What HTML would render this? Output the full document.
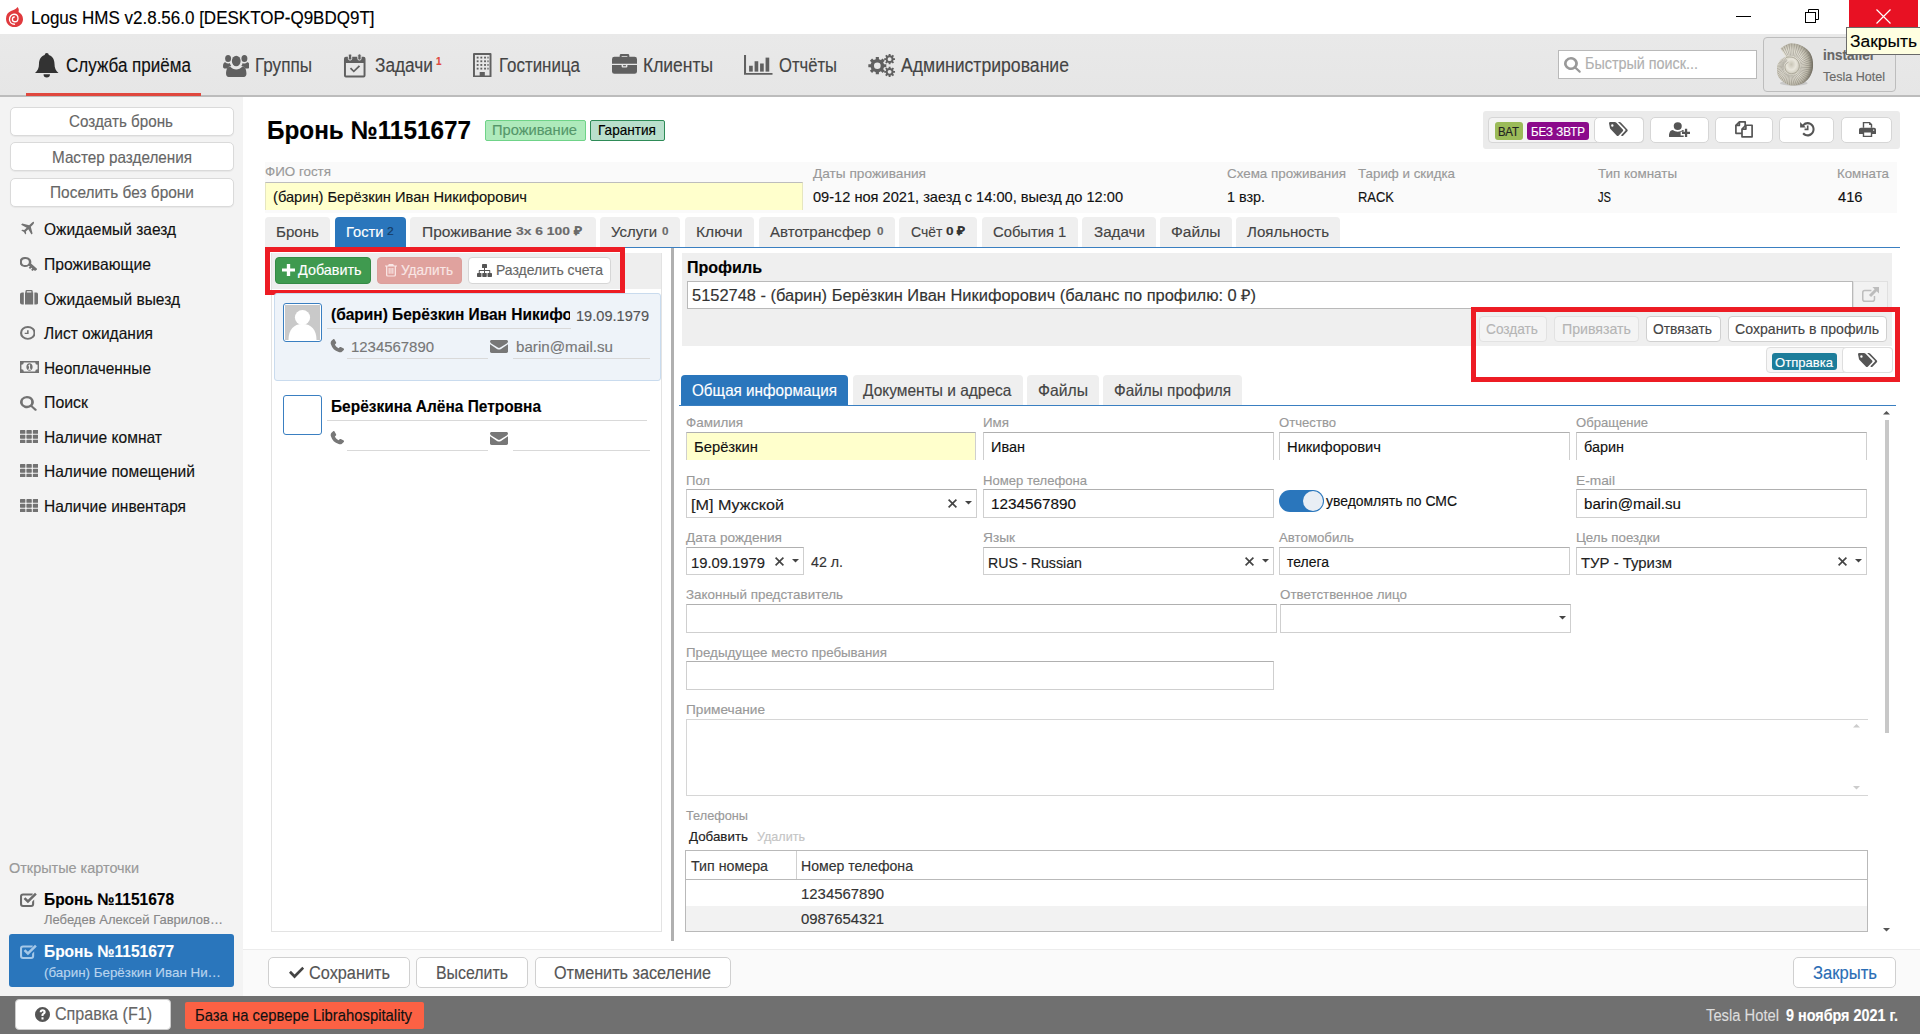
<!DOCTYPE html>
<html lang="ru"><head><meta charset="utf-8"><title>Logus HMS</title><style>
html,body{margin:0;padding:0;}
body{width:1920px;height:1034px;position:relative;overflow:hidden;background:#fff;font-family:"Liberation Sans",sans-serif;}
.b{position:absolute;box-sizing:border-box;}
.t{position:absolute;white-space:nowrap;transform-origin:0 0;display:block;-webkit-text-stroke:0.15px currentColor;}
svg{display:block;}
</style></head><body>
<div class="b" style="left:0px;top:0px;width:1920px;height:34px;background:#fff;"></div>
<svg style="position:absolute;left:5.500px;top:7px" width="17" height="20" viewBox="0 0 17 18" preserveAspectRatio="none"><path d="M11.500 0c1.500 1.500 1.500 3 1 4.500C15 5.500 17 8 17 11c0 4-3.500 7-8.500 7S0 15 0 10.500C0 7 2 4.500 5 3.500 7.500 2.700 10 2 11.500 0z" fill="#e03a3e"/><path d="M8.500 15.500c-3 0-5-2-5-4.500s2-4.500 4.500-4.500 4 1.700 4 3.600-1.400 3.200-3 3.200-2.600-1-2.600-2.300 1-2 1.900-2" fill="none" stroke="#fff" stroke-width="1.300" stroke-linecap="round"/></svg>
<span class="t" style="left:31px;top:9.79px;font-size:17.5px;line-height:17.5px;color:#000;transform:scaleX(0.9711);">Logus HMS v2.8.56.0 [DESKTOP-Q9BDQ9T]</span>
<div class="b" style="left:1736px;top:16px;width:15px;height:1px;background:#000;"></div>
<svg style="position:absolute;left:1805px;top:9px" width="15" height="15" viewBox="0 0 15 15" fill="none" stroke="#000" stroke-width="1"><rect x="0.500" y="3.500" width="10" height="10"/><path d="M3.500 3.500v-3h10v10h-3"/></svg>
<div class="b" style="left:1849px;top:0px;width:69px;height:34px;background:#e81123;"></div>
<svg style="position:absolute;left:1876px;top:9px" width="15" height="15" viewBox="0 0 15 15" fill="none" stroke="#fff" stroke-width="1.200"><path d="M0.500 0.500l14 14M14.500 0.500l-14 14"/></svg>
<div class="b" style="left:0px;top:34px;width:1920px;height:63px;background:linear-gradient(#e9e9e9,#e6e6e6);border-bottom:2px solid #bcbcbc;"></div>
<svg style="position:absolute;left:35px;top:53px" width="23.5" height="24.5" viewBox="1.2 1.2 17.6 17.7" fill="#333" color="#333" preserveAspectRatio="none" ><path d="M10 1.2c-.9 0-1.5.6-1.5 1.4C5.6 3.4 4.2 6 4.2 9c0 3.2-1 5-3 6.600h17.600c-2-1.600-3-3.400-3-6.600 0-3-1.400-5.600-4.300-6.400 0-.8-.6-1.400-1.500-1.400z"/><path d="M7.600 16.500a2.400 2.400 0 0 0 4.800 0z"/></svg>
<span class="t" style="left:66px;top:55.99px;font-size:19.5px;line-height:19.5px;color:#111;transform:scaleX(0.8736);">Служба приёма</span>
<div class="b" style="left:26px;top:93px;width:175px;height:3px;background:#e0483e;"></div>
<svg style="position:absolute;left:222.5px;top:53px" width="26.5" height="24.5" viewBox="0 0 26 20" fill="#606060" color="#606060" preserveAspectRatio="none" ><circle cx="13" cy="6.500" r="4.300"/><path d="M5.500 19.500c-1.500 0-2.500-.8-2.500-2.500 0-3 1-6 4-6 1.500 1.500 4 2.500 6 2.500s4.500-1 6-2.500c3 0 4 3 4 6 0 1.700-1 2.500-2.500 2.500z"/><circle cx="5" cy="4.500" r="2.900"/><circle cx="21" cy="4.500" r="2.900"/><path d="M0 11c0-2 .7-3.500 2.300-3.500 .9.700 1.800 1 2.700 1 .6 0 1.200-.1 1.700-.4.300 1 .8 1.900 1.400 2.500-1.800 0-3 .9-3.700 2.100H2.200C.8 12.700 0 12.100 0 11z"/><path d="M26 11c0-2-.7-3.500-2.300-3.500-.9.700-1.800 1-2.700 1-.6 0-1.200-.1-1.700-.4-.3 1-.8 1.900-1.400 2.500 1.800 0 3 .9 3.700 2.100h2.200c1.400 0 2.200-.6 2.200-1.700z"/></svg>
<span class="t" style="left:255px;top:55.99px;font-size:19.5px;line-height:19.5px;color:#444;transform:scaleX(0.8771);">Группы</span>
<svg style="position:absolute;left:343px;top:53px" width="23.5" height="24.5" viewBox="0 0 24 26" fill="#606060" color="#606060" preserveAspectRatio="none" ><path fill-rule="evenodd" d="M3 4h18a2 2 0 0 1 2 2v18a2 2 0 0 1-2 2H3a2 2 0 0 1-2-2V6a2 2 0 0 1 2-2zm0 6.500v13.500h18V10.500z"/><rect x="5.500" y="1" width="3.400" height="6.500" rx="1.500" stroke="#e8e8e8" stroke-width="1"/><rect x="15.100" y="1" width="3.400" height="6.500" rx="1.500" stroke="#e8e8e8" stroke-width="1"/><path d="M7 16.800l1.300-1.300 2.700 2.700 5.200-5.200 1.300 1.300-6.500 6.500z"/></svg>
<span class="t" style="left:375px;top:55.99px;font-size:19.5px;line-height:19.5px;color:#444;transform:scaleX(0.8857);">Задачи</span>
<span class="t" style="left:436px;top:55.77px;font-size:11.5px;line-height:11.5px;color:#e0483e;font-weight:bold;transform:scaleX(0.8585);">1</span>
<svg style="position:absolute;left:473px;top:52.7px" width="18.5" height="24.5" viewBox="0 0 18 24" fill="#606060" color="#606060" preserveAspectRatio="none" ><path fill-rule="evenodd" d="M1 0h16a1 1 0 0 1 1 1v22a1 1 0 0 1-1 1H1a1 1 0 0 1-1-1V1a1 1 0 0 1 1-1zm.9 1.900v20.200h4.600v-3.600h5v3.600h4.600V1.900z"/><g><rect x="3.600" y="3.600" width="1.800" height="1.800"/><rect x="7.200" y="3.600" width="1.800" height="1.800"/><rect x="10.800" y="3.600" width="1.800" height="1.800"/><rect x="3.600" y="7.200" width="1.800" height="1.800"/><rect x="7.200" y="7.200" width="1.800" height="1.800"/><rect x="10.800" y="7.200" width="1.800" height="1.800"/><rect x="3.600" y="10.800" width="1.800" height="1.800"/><rect x="7.200" y="10.800" width="1.800" height="1.800"/><rect x="10.800" y="10.800" width="1.800" height="1.800"/><rect x="3.600" y="14.400" width="1.800" height="1.800"/><rect x="7.200" y="14.400" width="1.800" height="1.800"/><rect x="10.800" y="14.400" width="1.800" height="1.800"/><rect x="14.000" y="3.600" width="1.200" height="1.800"/><rect x="14.000" y="7.200" width="1.200" height="1.800"/><rect x="14.000" y="10.800" width="1.200" height="1.800"/><rect x="14.000" y="14.400" width="1.200" height="1.800"/></g></svg>
<span class="t" style="left:499px;top:55.99px;font-size:19.5px;line-height:19.5px;color:#444;transform:scaleX(0.8676);">Гостиница</span>
<svg style="position:absolute;left:611.5px;top:53.4px" width="25" height="21.3" viewBox="0 0 26 22" fill="#606060" color="#606060" preserveAspectRatio="none" ><path fill-rule="evenodd" d="M8 4V2.500A1.500 1.500 0 0 1 9.500 1h7A1.500 1.500 0 0 1 18 2.500V4h5.500A2.500 2.500 0 0 1 26 6.500V11H0V6.500A2.500 2.500 0 0 1 2.500 4zm2 0h6V3h-6z"/><path d="M0 12.500h10v1.500a1 1 0 0 0 1 1h4a1 1 0 0 0 1-1v-1.500h10v6.500a2.500 2.500 0 0 1-2.500 2.500h-21A2.500 2.500 0 0 1 0 19z"/><rect x="11.500" y="12.500" width="3" height="1.200"/></svg>
<span class="t" style="left:643px;top:55.99px;font-size:19.5px;line-height:19.5px;color:#444;transform:scaleX(0.8951);">Клиенты</span>
<svg style="position:absolute;left:744px;top:54px" width="28.5" height="21.7" viewBox="0 0 28 24" fill="#606060" color="#606060" preserveAspectRatio="none" ><path d="M0 1h2v20h26v2H0z"/><rect x="5" y="13" width="3.600" height="6.500"/><rect x="10.400" y="8" width="3.600" height="11.500"/><rect x="15.800" y="10.500" width="3.600" height="9"/><rect x="21.200" y="4" width="3.600" height="15.500"/></svg>
<span class="t" style="left:779px;top:55.99px;font-size:19.5px;line-height:19.5px;color:#444;transform:scaleX(0.8522);">Отчёты</span>
<svg style="position:absolute;left:868px;top:53.2px" width="27.5" height="24.5" viewBox="0 0 28 26" fill="#606060" color="#606060" preserveAspectRatio="none" ><path fill-rule="evenodd" d="M18.66 11.90 L18.66 15.10 L16.31 15.13 L15.47 17.16 L17.11 18.85 L14.85 21.11 L13.16 19.47 L11.13 20.31 L11.10 22.66 L7.90 22.66 L7.87 20.31 L5.84 19.47 L4.15 21.11 L1.89 18.85 L3.53 17.16 L2.69 15.13 L0.34 15.10 L0.34 11.90 L2.69 11.87 L3.53 9.84 L1.89 8.15 L4.15 5.89 L5.84 7.53 L7.87 6.69 L7.90 4.34 L11.10 4.34 L11.13 6.69 L13.16 7.53 L14.85 5.89 L17.11 8.15 L15.47 9.84 L16.31 11.87z M6.10 13.50 a3.40 3.40 0 1 0 6.80 0 a3.40 3.40 0 1 0 -6.80 0z"/><path fill-rule="evenodd" d="M27.52 5.54 L27.52 7.46 L25.99 7.46 L25.50 8.64 L26.58 9.72 L25.22 11.08 L24.14 10.00 L22.96 10.49 L22.96 12.02 L21.04 12.02 L21.04 10.49 L19.86 10.00 L18.78 11.08 L17.42 9.72 L18.50 8.64 L18.01 7.46 L16.48 7.46 L16.48 5.54 L18.01 5.54 L18.50 4.36 L17.42 3.28 L18.78 1.92 L19.86 3.00 L21.04 2.51 L21.04 0.98 L22.96 0.98 L22.96 2.51 L24.14 3.00 L25.22 1.92 L26.58 3.28 L25.50 4.36 L25.99 5.54z M20.00 6.50 a2.00 2.00 0 1 0 4.00 0 a2.00 2.00 0 1 0 -4.00 0z"/><path fill-rule="evenodd" d="M27.52 19.04 L27.52 20.96 L25.99 20.96 L25.50 22.14 L26.58 23.22 L25.22 24.58 L24.14 23.50 L22.96 23.99 L22.96 25.52 L21.04 25.52 L21.04 23.99 L19.86 23.50 L18.78 24.58 L17.42 23.22 L18.50 22.14 L18.01 20.96 L16.48 20.96 L16.48 19.04 L18.01 19.04 L18.50 17.86 L17.42 16.78 L18.78 15.42 L19.86 16.50 L21.04 16.01 L21.04 14.48 L22.96 14.48 L22.96 16.01 L24.14 16.50 L25.22 15.42 L26.58 16.78 L25.50 17.86 L25.99 19.04z M20.00 20.00 a2.00 2.00 0 1 0 4.00 0 a2.00 2.00 0 1 0 -4.00 0z"/></svg>
<span class="t" style="left:901px;top:55.99px;font-size:19.5px;line-height:19.5px;color:#444;transform:scaleX(0.9035);">Администрирование</span>
<div class="b" style="left:1558px;top:50px;width:199px;height:29px;background:#fff;border:1px solid #b9b9b9;"></div>
<svg style="position:absolute;left:1563.8px;top:57.2px" width="17" height="16" viewBox="0 0 16 16" fill="#999" color="#999" preserveAspectRatio="none" ><path fill-rule="evenodd" d="M6.500 0a6.500 6.500 0 0 1 5.300 10.300l3.800 3.800a1.100 1.100 0 0 1-1.500 1.500l-3.800-3.800A6.500 6.500 0 1 1 6.500 0zm0 2.500a4 4 0 1 0 0 8 4 4 0 0 0 0-8z"/></svg>
<span class="t" style="left:1585px;top:56.46px;font-size:16px;line-height:16px;color:#b0b0b0;transform:scaleX(0.8972);">Быстрый поиск...</span>
<div class="b" style="left:1763px;top:37px;width:133px;height:55px;background:#e6e6e6;border:1px solid #bdbdbd;border-radius:4px;"></div>
<svg style="position:absolute;left:1777.3px;top:43.2px" width="37.5" height="43" viewBox="0 0 38 43"><defs><radialGradient id="sg" cx="38%" cy="50%" r="62%"><stop offset="0" stop-color="#efede4"/><stop offset=".55" stop-color="#e4e1d5"/><stop offset=".8" stop-color="#b9b5a6"/><stop offset="1" stop-color="#6e6a5e"/></radialGradient><radialGradient id="sg2" cx="45%" cy="45%" r="60%"><stop offset="0" stop-color="#c9c5b6"/><stop offset=".5" stop-color="#e9e6dc"/><stop offset="1" stop-color="#c4c0b1"/></radialGradient></defs><ellipse cx="17" cy="40.500" rx="14" ry="2.500" fill="#000" opacity=".13"/><path d="M3.6 5.2 L5.4 3.9 L7.3 2.6 L9.4 1.4 L11.7 0.5 L14.1 0.0 L16.5 0.1 L19.0 0.4 L21.4 1.0 L23.7 1.9 L25.9 2.9 L28.0 4.2 L30.0 5.8 L31.8 7.5 L33.3 9.4 L34.5 11.6 L35.4 13.9 L36.0 16.3 L36.4 18.7 L36.5 21.0 L36.5 23.4 L36.3 25.7 L35.8 28.0 L35.1 30.2 L34.1 32.3 L33.0 34.3 L31.6 36.1 L30.1 37.8 L28.3 39.2 L26.4 40.4 L24.4 41.3 L22.4 42.0 L20.3 42.4 L18.2 42.7 L16.1 42.8 L14.1 42.7 L12.1 42.3 L10.2 41.6 L8.5 40.7 L6.9 39.6 L5.4 38.4 L4.1 37.2 L2.8 35.9 L1.8 34.5 L1.0 32.9 L0.4 31.3 L0.1 29.7 L-0.1 28.0 L-0.2 26.4 L-0.1 24.9 L0.0 23.4 L0.3 21.9 L0.9 20.6 L1.6 19.3 L2.4 18.2 L3.2 17.1 L4.1 16.1 L5.1 15.3 L6.3 14.7 L7.4 14.2 L8.5 13.7z" fill="url(#sg)"/><path d="M9.8 12.8 L4.9 4.6 M11.2 12.6 L7.1 3.1 M12.6 12.6 L9.5 1.7 M13.9 12.8 L12.1 0.7 M15.2 13.0 L14.9 0.3 M16.4 13.2 L17.7 0.5 M17.7 13.6 L20.5 1.1 M18.8 14.2 L23.2 2.0 M19.8 14.9 L25.8 3.2 M20.8 15.7 L28.2 4.7 M21.6 16.7 L30.4 6.5 M22.3 17.7 L32.4 8.6 M22.8 18.8 L33.9 11.0 M23.3 19.9 L35.0 13.6 M23.5 21.0 L35.7 16.4 M23.7 22.2 L36.1 19.1 M23.7 23.4 L36.2 21.9 M23.6 24.6 L36.1 24.6 M23.3 25.7 L35.7 27.2 M22.9 26.8 L34.9 29.8 M22.4 27.8 L33.8 32.2 M21.7 28.7 L32.5 34.4 M20.9 29.5 L30.9 36.5 M20.0 30.2 L29.0 38.3 M19.1 30.8 L26.9 39.8 M18.1 31.3 L24.6 40.9 M17.1 31.6 L22.2 41.7 M16.0 31.8 L19.8 42.2 M15.0 31.9 L17.5 42.4 M14.0 31.9 L15.1 42.4 M12.9 31.8 L12.8 42.2 M11.9 31.5 L10.6 41.5 M11.0 31.1 L8.6 40.4 M10.1 30.5 L6.8 39.1 M9.4 29.9 L5.1 37.7 M8.7 29.2 L3.6 36.3 M8.1 28.4 L2.3 34.8 M7.7 27.6 L1.4 33.0 M7.3 26.7 L0.7 31.1 M7.1 25.8 L0.3 29.3 M7.0 24.9 L0.1 27.4 M6.9 24.0 L0.1 25.6 M7.0 23.2 L0.2 23.9 M7.1 22.3 L0.5 22.2 M7.4 21.5 L1.2 20.6 M7.8 20.7 L2.0 19.2 M8.3 20.1 L2.9 17.9 M8.9 19.5 L3.9 16.7 M9.5 19.0 L5.0 15.8 M10.2 18.5 L6.3 15.0 M10.8 18.2 L7.6 14.4" stroke="#77736a" stroke-width=".55" fill="none" opacity=".8"/><path d="M8.5 13.7 L10.4 13.2 L12.3 13.1 L14.1 13.2 L15.9 13.4 L17.5 14.0 L19.1 14.8 L20.4 15.9 L21.5 17.2 L22.4 18.6 L23.0 20.2 L23.3 21.8 L23.4 23.4 L23.2 25.0 L22.7 26.5 L21.9 27.9 L20.9 29.1 L19.7 30.0 L18.4 30.8 L17.0 31.3 L15.5 31.6 L14.1 31.6 L12.7 31.4 L11.4 30.9 L10.2 30.1 L9.2 29.2 L8.4 28.2 L7.9 27.0 L7.5 25.8 L7.3 24.6 L7.3 23.4 L7.5 22.2 L8.0 21.2 L8.6 20.3 L9.4 19.5 L10.3 18.9 L11.2 18.4z" fill="url(#sg2)"/><path d="M8.9 14.4 L11.0 13.9 L13.1 13.9 L15.1 14.1 L17.0 14.6 L18.7 15.5 L20.1 16.7 L21.3 18.2 L22.0 19.9 L22.5 21.6 L22.6 23.4 L22.3 25.1 L21.6 26.8 L20.6 28.2 L19.4 29.3 L18.0 30.1 L16.4 30.6 L14.9 30.8 L13.3 30.7 L11.9 30.2 L10.6 29.4 L9.6 28.4 L8.8 27.2 L8.3 26.0 L8.1 24.7 L8.1 23.4 L8.4 22.2 L9.0 21.1 L9.8 20.2 L10.7 19.6 L11.6 19.1" stroke="#a39f91" stroke-width=".8" fill="none"/></svg>
<span class="t" style="left:1822.5px;top:46.88px;font-size:15.5px;line-height:15.5px;color:#666;font-weight:bold;transform:scaleX(0.8746);">installer</span>
<span class="t" style="left:1822.5px;top:71.02px;font-size:12.5px;line-height:12.5px;color:#6a6a6a;transform:scaleX(1.0025);">Tesla Hotel</span>
<div class="b" style="left:1846px;top:26.5px;width:75px;height:28px;background:#ffffe1;border:1px solid #6a6a6a;"></div>
<span class="t" style="left:1849.5px;top:33.44px;font-size:17.2px;line-height:17.2px;color:#000;transform:scaleX(1.0120);">Закрыть</span>
<div class="b" style="left:0px;top:97px;width:243px;height:899px;background:#f3f3f3;"></div>
<div class="b" style="left:9.5px;top:106.5px;width:224.5px;height:29px;background:#fff;border:1px solid #dadada;border-radius:5px;box-shadow:0 1px 1px rgba(0,0,0,.05);"></div>
<span class="t" style="left:69px;top:112.53px;font-size:16.5px;line-height:16.5px;color:#666;transform:scaleX(0.9219);">Создать бронь</span>
<div class="b" style="left:9.5px;top:142px;width:224.5px;height:29px;background:#fff;border:1px solid #dadada;border-radius:5px;box-shadow:0 1px 1px rgba(0,0,0,.05);"></div>
<span class="t" style="left:52px;top:148.53px;font-size:16.5px;line-height:16.5px;color:#666;transform:scaleX(0.9249);">Мастер разделения</span>
<div class="b" style="left:9.5px;top:177.5px;width:224.5px;height:29px;background:#fff;border:1px solid #dadada;border-radius:5px;box-shadow:0 1px 1px rgba(0,0,0,.05);"></div>
<span class="t" style="left:50px;top:183.53px;font-size:16.5px;line-height:16.5px;color:#666;transform:scaleX(0.9359);">Поселить без брони</span>
<svg style="position:absolute;left:19.7px;top:221.4px" width="14.5" height="14" viewBox="0 0 18 18" fill="#727272" color="#727272" preserveAspectRatio="none" ><path d="M17 1c.8.800.300 2.600-1 3.900l-2.600 2.600 2.200 8.600-1.400 1.400-3.900-6.900-3 3 .4 2.600-1.100 1.100-1.700-3.300-3.300-1.700 1.100-1.100 2.600.4 3-3L1.400 4.700 2.800 3.300l8.600 2.200L14 2.900C15.300 1.600 16.400.400 17 1z"/></svg>
<span class="t" style="left:44px;top:221.03px;font-size:16.5px;line-height:16.5px;color:#111;transform:scaleX(0.9397);">Ожидаемый заезд</span>
<svg style="position:absolute;left:19.7px;top:257px" width="17" height="15" viewBox="0 0 18 18" fill="#727272" color="#727272" preserveAspectRatio="none" ><path fill-rule="evenodd" d="M6 0a6 6 0 0 1 5.700 7.900l6 6c.4.400.4 1 0 1.400l-1 1a1 1 0 0 1-1.400 0l-.8-.8-1.300 1.300-1.500-1.500 1.300-1.300-1-1-1.300 1.300L9.200 12.800l1.300-1.300-1.100-1.100A6 6 0 1 1 6 0zm-.3 2.300a3.700 3.700 0 1 0 0 7.400 3.700 3.700 0 0 0 0-7.400z"/></svg>
<span class="t" style="left:44px;top:256.03px;font-size:16.5px;line-height:16.5px;color:#111;transform:scaleX(0.9520);">Проживающие</span>
<svg style="position:absolute;left:19.8px;top:290.4px" width="18.2" height="14.6" viewBox="0 0 20 17" fill="#727272" color="#727272" preserveAspectRatio="none" ><path fill-rule="evenodd" d="M6 3V1.500A1.500 1.500 0 0 1 7.500 0h5A1.500 1.500 0 0 1 14 1.500V3h.5v14h-9V3zm1.500 0h5V1.500h-5z"/><path d="M4.200 3v14H2.300A2.300 2.300 0 0 1 0 14.700V5.300A2.300 2.300 0 0 1 2.300 3z"/><path d="M15.800 3v14h1.900a2.300 2.300 0 0 0 2.300-2.300V5.300A2.300 2.300 0 0 0 17.700 3z"/></svg>
<span class="t" style="left:44px;top:291.03px;font-size:16.5px;line-height:16.5px;color:#111;transform:scaleX(0.9422);">Ожидаемый выезд</span>
<svg style="position:absolute;left:19.8px;top:326px" width="15.7" height="13.8" viewBox="0 0 16 16" fill="#727272" color="#727272" preserveAspectRatio="none" ><path fill-rule="evenodd" d="M8 0a8 8 0 1 1 0 16A8 8 0 0 1 8 0zm0 2.200a5.800 5.800 0 1 0 0 11.600A5.800 5.800 0 0 0 8 2.200z"/><path d="M7.200 3.800h1.600v4.400h-4V6.700h2.400z" transform="translate(0,1)"/></svg>
<span class="t" style="left:44px;top:325.03px;font-size:16.5px;line-height:16.5px;color:#111;transform:scaleX(0.9417);">Лист ожидания</span>
<svg style="position:absolute;left:19.8px;top:361px" width="19" height="12" viewBox="0 0 20 13" fill="#727272" color="#727272" preserveAspectRatio="none" ><path fill-rule="evenodd" d="M0 0h20v13H0zm1.500 4v5A2.500 2.500 0 0 1 4 11.500h12A2.500 2.500 0 0 1 18.500 9V4A2.500 2.500 0 0 1 16 1.500H4A2.500 2.500 0 0 1 1.500 4z"/><path fill-rule="evenodd" d="M10 2.500c2 0 3.300 1.800 3.300 4s-1.300 4-3.300 4-3.300-1.800-3.300-4 1.300-4 3.300-4zm-1.300 2.300v1h.8v2.700h-.9v1h2.900v-1h-.9V3.800h-.9z"/></svg>
<span class="t" style="left:44px;top:360.03px;font-size:16.5px;line-height:16.5px;color:#111;transform:scaleX(0.9330);">Неоплаченные</span>
<svg style="position:absolute;left:19.8px;top:395.6px" width="17" height="15" viewBox="0 0 16 16" fill="#727272" color="#727272" preserveAspectRatio="none" ><path fill-rule="evenodd" d="M6.500 0a6.500 6.500 0 0 1 5.300 10.300l3.800 3.800a1.100 1.100 0 0 1-1.500 1.500l-3.800-3.800A6.500 6.500 0 1 1 6.500 0zm0 2.500a4 4 0 1 0 0 8 4 4 0 0 0 0-8z"/></svg>
<span class="t" style="left:44px;top:394.03px;font-size:16.5px;line-height:16.5px;color:#111;transform:scaleX(0.9621);">Поиск</span>
<svg style="position:absolute;left:19.8px;top:429.5px" width="18.2" height="13.5" viewBox="0 0 18 14" fill="#727272" color="#727272" preserveAspectRatio="none" ><rect x="0" y="0" width="5.300" height="4" rx=".5"/><rect x="0" y="5" width="5.300" height="4" rx=".5"/><rect x="0" y="10" width="5.300" height="4" rx=".5"/><rect x="6.35" y="0" width="5.300" height="4" rx=".5"/><rect x="6.35" y="5" width="5.300" height="4" rx=".5"/><rect x="6.35" y="10" width="5.300" height="4" rx=".5"/><rect x="12.7" y="0" width="5.300" height="4" rx=".5"/><rect x="12.7" y="5" width="5.300" height="4" rx=".5"/><rect x="12.7" y="10" width="5.300" height="4" rx=".5"/></svg>
<span class="t" style="left:44px;top:429.03px;font-size:16.5px;line-height:16.5px;color:#111;transform:scaleX(0.9446);">Наличие комнат</span>
<svg style="position:absolute;left:19.8px;top:463.5px" width="18.2" height="13.5" viewBox="0 0 18 14" fill="#727272" color="#727272" preserveAspectRatio="none" ><rect x="0" y="0" width="5.300" height="4" rx=".5"/><rect x="0" y="5" width="5.300" height="4" rx=".5"/><rect x="0" y="10" width="5.300" height="4" rx=".5"/><rect x="6.35" y="0" width="5.300" height="4" rx=".5"/><rect x="6.35" y="5" width="5.300" height="4" rx=".5"/><rect x="6.35" y="10" width="5.300" height="4" rx=".5"/><rect x="12.7" y="0" width="5.300" height="4" rx=".5"/><rect x="12.7" y="5" width="5.300" height="4" rx=".5"/><rect x="12.7" y="10" width="5.300" height="4" rx=".5"/></svg>
<span class="t" style="left:44px;top:463.03px;font-size:16.5px;line-height:16.5px;color:#111;transform:scaleX(0.9422);">Наличие помещений</span>
<svg style="position:absolute;left:19.8px;top:498.5px" width="18.2" height="13.5" viewBox="0 0 18 14" fill="#727272" color="#727272" preserveAspectRatio="none" ><rect x="0" y="0" width="5.300" height="4" rx=".5"/><rect x="0" y="5" width="5.300" height="4" rx=".5"/><rect x="0" y="10" width="5.300" height="4" rx=".5"/><rect x="6.35" y="0" width="5.300" height="4" rx=".5"/><rect x="6.35" y="5" width="5.300" height="4" rx=".5"/><rect x="6.35" y="10" width="5.300" height="4" rx=".5"/><rect x="12.7" y="0" width="5.300" height="4" rx=".5"/><rect x="12.7" y="5" width="5.300" height="4" rx=".5"/><rect x="12.7" y="10" width="5.300" height="4" rx=".5"/></svg>
<span class="t" style="left:44px;top:498.03px;font-size:16.5px;line-height:16.5px;color:#111;transform:scaleX(0.9392);">Наличие инвентаря</span>
<span class="t" style="left:9px;top:861.15px;font-size:14px;line-height:14px;color:#999;transform:scaleX(1.0309);">Открытые карточки</span>
<svg style="position:absolute;left:19.6px;top:891.5px" width="17" height="15" viewBox="0 0 18 16" fill="#6b6b6b" color="#6b6b6b" preserveAspectRatio="none" ><path d="M3.200 1.500h9.300a3.200 3.200 0 0 1 1.500.4l-1.700 1.700H3.200A1 1 0 0 0 2.200 4.600v8.200a1 1 0 0 0 1 1h8.600a1 1 0 0 0 1-1V10.300L15 8.100v4.700A3.200 3.200 0 0 1 11.800 16H3.200A3.200 3.200 0 0 1 0 12.800V4.700A3.200 3.200 0 0 1 3.200 1.500z"/><path d="M3.800 7.400l1.900-1.900 2.700 2.700L15.900.7l1.900 1.900-9.400 9.400z"/></svg>
<span class="t" style="left:44px;top:891.03px;font-size:16.5px;line-height:16.5px;color:#000;font-weight:bold;transform:scaleX(0.9391);">Бронь №1151678</span>
<span class="t" style="left:44px;top:912.57px;font-size:13.5px;line-height:13.5px;color:#888;transform:scaleX(0.9633);">Лебедев Алексей Гаврилов…</span>
<div class="b" style="left:9px;top:934px;width:225px;height:53px;background:#2a76bc;border-radius:3px;"></div>
<svg style="position:absolute;left:19.6px;top:943.5px" width="17" height="15" viewBox="0 0 18 16" fill="#a5c8e8" color="#a5c8e8" preserveAspectRatio="none" ><path d="M3.200 1.500h9.300a3.200 3.200 0 0 1 1.500.4l-1.700 1.700H3.200A1 1 0 0 0 2.200 4.600v8.200a1 1 0 0 0 1 1h8.600a1 1 0 0 0 1-1V10.300L15 8.100v4.700A3.200 3.200 0 0 1 11.800 16H3.200A3.200 3.200 0 0 1 0 12.800V4.700A3.200 3.200 0 0 1 3.200 1.500z"/><path d="M3.800 7.400l1.900-1.900 2.700 2.700L15.900.7l1.900 1.900-9.400 9.400z"/></svg>
<span class="t" style="left:44px;top:943.03px;font-size:16.5px;line-height:16.5px;color:#fff;font-weight:bold;transform:scaleX(0.9391);">Бронь №1151677</span>
<span class="t" style="left:44px;top:965.57px;font-size:13.5px;line-height:13.5px;color:#b9d4ee;transform:scaleX(0.9908);">(барин) Берёзкин Иван Ни…</span>
<div class="b" style="left:0px;top:996px;width:1920px;height:38px;background:#707070;"></div>
<div class="b" style="left:15px;top:999px;width:156px;height:31px;background:#fff;border:1px solid #ccc;border-radius:4px;"></div>
<svg style="position:absolute;left:34.6px;top:1007.4px" width="15" height="15" viewBox="0 0 16 16" fill="#555" color="#555" preserveAspectRatio="none" ><path fill-rule="evenodd" d="M8 0a8 8 0 1 1 0 16A8 8 0 0 1 8 0zM6.900 11v2.200h2.200V11zM5 5.600h2.200c0-.8.400-1.200 1-1.200.5 0 .9.300.9.800 0 .4-.2.700-.8 1.100-1 .7-1.400 1.300-1.400 2.400V9.500h2.200V9c0-.5.200-.8.900-1.300.9-.6 1.400-1.400 1.400-2.500 0-1.700-1.300-2.800-3.300-2.800S5 3.700 5 5.600z"/></svg>
<span class="t" style="left:54.5px;top:1005.26px;font-size:18px;line-height:18px;color:#666;transform:scaleX(0.8931);">Справка (F1)</span>
<div class="b" style="left:185px;top:1002px;width:239px;height:27px;background:#fc6144;border-radius:2px;"></div>
<span class="t" style="left:195px;top:1006.79px;font-size:16.2px;line-height:16.2px;color:#111;transform:scaleX(0.9163);">База на сервере Librahospitality</span>
<span class="t" style="left:1706px;top:1006.90px;font-size:16.3px;line-height:16.3px;color:#ddd;transform:scaleX(0.9063);">Tesla Hotel</span>
<span class="t" style="left:1786px;top:1006.90px;font-size:16.3px;line-height:16.3px;color:#fff;font-weight:bold;transform:scaleX(0.8828);">9 ноября 2021 г.</span>
<span class="t" style="left:267px;top:116.69px;font-size:26px;line-height:26px;color:#000;font-weight:bold;transform:scaleX(0.9352);">Бронь №1151677</span>
<div class="b" style="left:485px;top:119.5px;width:101px;height:21.5px;background:#aeeabb;border:1px solid #6fd388;border-radius:2px;"></div>
<span class="t" style="left:492px;top:123.03px;font-size:14.5px;line-height:14.5px;color:#55976a;transform:scaleX(1.0123);">Проживание</span>
<div class="b" style="left:590px;top:119.5px;width:75px;height:21.5px;background:#b9dfcc;border:1px solid #2e8b57;border-radius:2px;"></div>
<span class="t" style="left:598px;top:123.03px;font-size:14.5px;line-height:14.5px;color:#000;transform:scaleX(0.9378);">Гарантия</span>
<div class="b" style="left:1483px;top:111px;width:417px;height:38px;background:#ebebeb;border-radius:3px;"></div>
<div class="b" style="left:1488px;top:116.5px;width:156px;height:26px;background:#f4f4f4;border:1px solid #d6d6d6;border-radius:4px;"></div>
<div class="b" style="left:1494.5px;top:122px;width:28px;height:18px;background:#9bbb59;border-radius:3px;"></div>
<span class="t" style="left:1498px;top:126.42px;font-size:12.5px;line-height:12.5px;color:#222;transform:scaleX(0.9162);">ВАТ</span>
<div class="b" style="left:1527px;top:122px;width:62px;height:18px;background:#8b0a8b;border-radius:3px;"></div>
<span class="t" style="left:1531px;top:126.42px;font-size:12.5px;line-height:12.5px;color:#fff;transform:scaleX(0.9258);">БЕЗ ЗВТР</span>
<div class="b" style="left:1593.5px;top:116.5px;width:50px;height:26px;background:#fff;border:1px solid #d6d6d6;border-radius:5px;"></div>
<svg style="position:absolute;left:1609.3px;top:121.8px" width="19" height="15" viewBox="0 0 24 18" fill="#555" color="#555" preserveAspectRatio="none" ><path fill-rule="evenodd" d="M0 1.500A1.500 1.500 0 0 1 1.500 0h5.800c.8 0 1.500.3 2.100.9l8 8c.6.600.6 1.500 0 2.100L12 16.400c-.6.600-1.500.6-2.100 0l-8-8A3 3 0 0 1 1 6.300zm4.200 1.200a1.500 1.500 0 1 0 0 3 1.500 1.500 0 0 0 0-3z"/><path d="M11.300 0h1.800c.8 0 1.500.3 2.100.9l8 8c.6.600.6 1.500 0 2.100l-5.400 5.400c-.6.600-1.500.6-2.100 0l-.5-.5 5.400-5.400c.4-.4.4-1 0-1.400z"/></svg>
<div class="b" style="left:1649.5px;top:116.5px;width:59px;height:26px;background:#fff;border:1px solid #d6d6d6;border-radius:5px;"></div>
<svg style="position:absolute;left:1669px;top:121.8px" width="21" height="15.3" viewBox="0 0 24 18" fill="#555" color="#555" preserveAspectRatio="none" ><circle cx="10" cy="4.800" r="4.600"/><path d="M1 18c-.8 0-1-.6-1-1.500C0 13 1.500 9.500 4.500 9.500 6 10.800 8 11.500 10 11.500s4-.7 5.500-2c.5 0 .9.1 1.300.3v1.800h-3.500v4.200h3.500V18z"/><path d="M18.200 8h2.600v3.600h3.200v2.600h-3.200V18h-2.600v-3.800H14.800v-2.600h3.400z"/></svg>
<div class="b" style="left:1715px;top:116.5px;width:57.5px;height:26px;background:#fff;border:1px solid #d6d6d6;border-radius:5px;"></div>
<svg style="position:absolute;left:1735.4px;top:121.1px" width="18" height="16.7" viewBox="0 0 18 17" fill="#555" color="#555" preserveAspectRatio="none" ><g fill="none" stroke="currentColor" stroke-width="1.700" stroke-linejoin="round"><path d="M4.400.9H10.200V12.600H.9V4.400z"/><path d="M4.400.9V4.400H.9"/><path d="M10.900 4.300H17.100V16.100H7V8.200z" fill="#fff"/><path d="M10.900 4.300V8.200H7"/></g></svg>
<div class="b" style="left:1779.4px;top:116.5px;width:55px;height:26px;background:#fff;border:1px solid #d6d6d6;border-radius:5px;"></div>
<svg style="position:absolute;left:1799.3px;top:122.2px" width="15.6" height="14.5" viewBox="0 0 18 16" fill="#555" color="#555" preserveAspectRatio="none" ><path d="M10 0a8 8 0 1 1-6.100 13.200l1.800-1.600A5.600 5.600 0 1 0 10 2.400 5.600 5.600 0 0 0 5.900 4.200L7.900 6.200H1.300V0l2.700 2.700A8 8 0 0 1 10 0z"/><path d="M9.100 3.800h1.900v5.200H6.400V7.200h2.700z"/></svg>
<div class="b" style="left:1841.2px;top:116.5px;width:50.4px;height:26px;background:#fff;border:1px solid #d6d6d6;border-radius:5px;"></div>
<svg style="position:absolute;left:1859px;top:121.8px" width="17" height="15" viewBox="0 0 18 17" fill="#555" color="#555" preserveAspectRatio="none" ><path fill-rule="evenodd" d="M4 0h7.500L14 2.500V6.500h-1.500V3.300H10.700V1.500H5.500v5H4z"/><path fill-rule="evenodd" d="M2 6.500h14a2 2 0 0 1 2 2V13a.6.600 0 0 1-.6.600H14V17H4v-3.400H.6A.6.600 0 0 1 0 13V8.500a2 2 0 0 1 2-2zM5.500 12v3.500h7V12zm10-3.600a.8.800 0 1 0 0 1.600.8.800 0 0 0 0-1.600z"/></svg>
<div class="b" style="left:265px;top:162px;width:1632px;height:51px;background:#fafafa;"></div>
<span class="t" style="left:265px;top:165.27px;font-size:13.5px;line-height:13.5px;color:#999;transform:scaleX(0.9909);">ФИО гостя</span>
<span class="t" style="left:813px;top:166.57px;font-size:13.5px;line-height:13.5px;color:#999;transform:scaleX(1.0127);">Даты проживания</span>
<span class="t" style="left:1227px;top:166.57px;font-size:13.5px;line-height:13.5px;color:#999;transform:scaleX(0.9918);">Схема проживания</span>
<span class="t" style="left:1358px;top:166.57px;font-size:13.5px;line-height:13.5px;color:#999;transform:scaleX(0.9884);">Тариф и скидка</span>
<span class="t" style="left:1598px;top:166.57px;font-size:13.5px;line-height:13.5px;color:#999;transform:scaleX(0.9918);">Тип комнаты</span>
<span class="t" style="left:1837px;top:166.57px;font-size:13.5px;line-height:13.5px;color:#999;transform:scaleX(0.9835);">Комната</span>
<div class="b" style="left:265px;top:182px;width:538px;height:27.5px;background:#ffffcc;border:1px solid #e6e6c0;border-top-color:#bdbdbd;border-bottom:none;"></div>
<span class="t" style="left:273px;top:188.70px;font-size:15px;line-height:15px;color:#111;transform:scaleX(0.9771);">(барин) Берёзкин Иван Никифорович</span>
<span class="t" style="left:813px;top:188.90px;font-size:15px;line-height:15px;color:#111;transform:scaleX(0.9736);">09-12 ноя 2021, заезд с 14:00, выезд до 12:00</span>
<span class="t" style="left:1227px;top:188.90px;font-size:15px;line-height:15px;color:#111;transform:scaleX(0.9571);">1 взр.</span>
<span class="t" style="left:1358px;top:188.90px;font-size:15px;line-height:15px;color:#111;transform:scaleX(0.8636);">RACK</span>
<span class="t" style="left:1598px;top:188.90px;font-size:15px;line-height:15px;color:#111;transform:scaleX(0.7422);">JS</span>
<span class="t" style="left:1837.8px;top:188.90px;font-size:15px;line-height:15px;color:#111;transform:scaleX(0.9788);">416</span>
<div class="b" style="left:265px;top:247px;width:1635px;height:1px;background:#3a7fc1;"></div>
<div class="b" style="left:265px;top:217px;width:65px;height:30px;background:#efefef;border-radius:4px 4px 0 0;"></div>
<span class="t" style="left:276px;top:224.08px;font-size:15.5px;line-height:15.5px;color:#444;transform:scaleX(0.9759);">Бронь</span>
<div class="b" style="left:335px;top:217px;width:71px;height:30px;background:#2a76bc;border-radius:4px 4px 0 0;"></div>
<span class="t" style="left:346px;top:224.08px;font-size:15.5px;line-height:15.5px;color:#fff;transform:scaleX(0.9497);">Гости</span>
<span class="t" style="left:387px;top:225.81px;font-size:11.8px;line-height:11.8px;color:#163c64;transform:scaleX(1.0210);">2</span>
<div class="b" style="left:410px;top:217px;width:186px;height:30px;background:#efefef;border-radius:4px 4px 0 0;"></div>
<span class="t" style="left:422px;top:224.08px;font-size:15.5px;line-height:15.5px;color:#444;transform:scaleX(1.0026);">Проживание</span>
<span class="t" style="left:516.4px;top:225.81px;font-size:11.8px;line-height:11.8px;color:#6a6a6a;font-weight:bold;transform:scaleX(1.1743);">3x 6 100 ₽</span>
<div class="b" style="left:600px;top:217px;width:80px;height:30px;background:#efefef;border-radius:4px 4px 0 0;"></div>
<span class="t" style="left:611px;top:224.08px;font-size:15.5px;line-height:15.5px;color:#444;transform:scaleX(0.9649);">Услуги</span>
<span class="t" style="left:661.7px;top:225.81px;font-size:11.8px;line-height:11.8px;color:#6a6a6a;font-weight:bold;transform:scaleX(0.9905);">0</span>
<div class="b" style="left:685px;top:217px;width:69px;height:30px;background:#efefef;border-radius:4px 4px 0 0;"></div>
<span class="t" style="left:696px;top:224.08px;font-size:15.5px;line-height:15.5px;color:#444;transform:scaleX(1.0088);">Ключи</span>
<div class="b" style="left:759px;top:217px;width:136px;height:30px;background:#efefef;border-radius:4px 4px 0 0;"></div>
<span class="t" style="left:770px;top:224.08px;font-size:15.5px;line-height:15.5px;color:#444;transform:scaleX(0.9703);">Автотрансфер</span>
<span class="t" style="left:876.6px;top:225.81px;font-size:11.8px;line-height:11.8px;color:#6a6a6a;font-weight:bold;transform:scaleX(0.9905);">0</span>
<div class="b" style="left:899px;top:217px;width:78px;height:30px;background:#efefef;border-radius:4px 4px 0 0;"></div>
<span class="t" style="left:910.7px;top:224.08px;font-size:15.5px;line-height:15.5px;color:#444;transform:scaleX(0.8987);">Счёт</span>
<span class="t" style="left:946.4px;top:225.81px;font-size:11.8px;line-height:11.8px;color:#333;font-weight:bold;transform:scaleX(1.1577);">0 ₽</span>
<div class="b" style="left:982px;top:217px;width:96px;height:30px;background:#efefef;border-radius:4px 4px 0 0;"></div>
<span class="t" style="left:993px;top:224.08px;font-size:15.5px;line-height:15.5px;color:#444;transform:scaleX(0.9529);">События 1</span>
<div class="b" style="left:1082px;top:217px;width:74px;height:30px;background:#efefef;border-radius:4px 4px 0 0;"></div>
<span class="t" style="left:1093.5px;top:224.08px;font-size:15.5px;line-height:15.5px;color:#444;transform:scaleX(0.9799);">Задачи</span>
<div class="b" style="left:1160px;top:217px;width:72px;height:30px;background:#efefef;border-radius:4px 4px 0 0;"></div>
<span class="t" style="left:1171px;top:224.08px;font-size:15.5px;line-height:15.5px;color:#444;transform:scaleX(1.0051);">Файлы</span>
<div class="b" style="left:1236px;top:217px;width:104px;height:30px;background:#efefef;border-radius:4px 4px 0 0;"></div>
<span class="t" style="left:1247.2px;top:224.08px;font-size:15.5px;line-height:15.5px;color:#444;transform:scaleX(0.9713);">Лояльность</span>
<div class="b" style="left:271px;top:253px;width:391px;height:679px;background:#fff;border:1px solid #e3e3e3;"></div>
<div class="b" style="left:272px;top:253px;width:389px;height:36px;background:#eeeeee;"></div>
<div class="b" style="left:275px;top:257px;width:96px;height:27px;background:#3f9a4f;border:1px solid #358a45;border-radius:4px;"></div>
<svg style="position:absolute;left:282px;top:264px" width="13" height="12" viewBox="0 0 14 14" fill="#fff" color="#fff" preserveAspectRatio="none" ><path d="M5.200 0h3.600v5.200H14v3.600H8.800V14H5.200V8.800H0V5.200h5.200z"/></svg>
<span class="t" style="left:298.4px;top:263.04px;font-size:14.6px;line-height:14.6px;color:#fff;transform:scaleX(0.9845);">Добавить</span>
<div class="b" style="left:377px;top:257px;width:85px;height:27px;background:#e0a29e;border:1px solid #dc9f9b;border-radius:4px;"></div>
<svg style="position:absolute;left:384.5px;top:264px" width="12" height="12.6" viewBox="0 0 14 16" fill="#f9e6e5" color="#f9e6e5" preserveAspectRatio="none" ><path fill-rule="evenodd" d="M4.500 0h5l1 1.800H14v1.500h-1.200V14a2 2 0 0 1-2 2H3.200a2 2 0 0 1-2-2V3.300H0V1.800h3.500zm-1.800 3.300V14a.5.500 0 0 0 .5.500h7.600a.5.500 0 0 0 .5-.5V3.300zM4.200 5h1.300v7.500H4.200zm2.150 0h1.300v7.500h-1.300zm2.150 0h1.300v7.500H8.500z"/></svg>
<span class="t" style="left:401px;top:263.04px;font-size:14.6px;line-height:14.6px;color:#f9e6e5;transform:scaleX(0.9333);">Удалить</span>
<div class="b" style="left:468px;top:257px;width:143px;height:27px;background:#fff;border:1px solid #d6d6d6;border-radius:4px;"></div>
<svg style="position:absolute;left:477px;top:264px" width="15" height="13" viewBox="0 0 18 16" fill="#555" color="#555" preserveAspectRatio="none" ><rect x="6" y="0" width="6" height="5" rx=".8"/><rect x="0" y="11" width="5.400" height="5" rx=".8"/><rect x="6.300" y="11" width="5.400" height="5" rx=".8"/><rect x="12.600" y="11" width="5.400" height="5" rx=".8"/><path d="M8.400 5h1.200v2.400h5.700a.6.600 0 0 1 .6.600v3h-1.200V8.600H9.600V11H8.400V8.600H3.300V11H2.100V8a.6.600 0 0 1 .6-.6h5.700z"/></svg>
<span class="t" style="left:496px;top:263.04px;font-size:14.6px;line-height:14.6px;color:#666;transform:scaleX(0.9576);">Разделить счета</span>
<div class="b" style="left:265px;top:247px;width:360px;height:47.5px;border:5px solid #ed1c24;"></div>
<div class="b" style="left:274px;top:293px;width:387px;height:88px;background:#eef3f9;border:1px solid #c9dbee;border-radius:3px;"></div>
<div class="b" style="left:282.5px;top:303px;width:39px;height:39px;background:#fff;border:1px solid #3a7fc1;border-radius:3px;"></div>
<svg style="position:absolute;left:284.500px;top:305px" width="35" height="35" viewBox="0 0 35 35"><rect width="35" height="35" fill="#c9c9c9"/><circle cx="17.500" cy="12.500" r="7.600" fill="#fff"/><path d="M3.500 35c0-10 5-16 14-16s14 6 14 16z" fill="#fff"/></svg>
<div class="b" style="left:331px;top:300px;width:239.200px;height:26px;overflow:hidden">
<span class="t" style="left:0px;top:5.61px;font-size:17px;line-height:17px;color:#000;font-weight:bold;transform:scaleX(0.9109);">(барин) Берёзкин Иван Никифорович</span>
</div>
<div class="b" style="left:327px;top:328px;width:244px;height:1px;background:#d9d9d9;"></div>
<span class="t" style="left:576px;top:308.30px;font-size:15px;line-height:15px;color:#555;transform:scaleX(0.9723);">19.09.1979</span>
<svg style="position:absolute;left:329.5px;top:338.5px" width="14" height="14" viewBox="0 0 14 14" fill="#777" color="#777" preserveAspectRatio="none" ><path d="M3.200.3c.4-.4 1-.4 1.300.1l1.600 2.900c.2.400.1.900-.2 1.200l-1 1c.8 1.700 2 2.900 3.700 3.700l1-1c.3-.3.800-.4 1.200-.2l2.900 1.600c.5.300.5.900.1 1.300l-1.600 1.600c-.9.900-2.300 1-3.500.6C4.500 11.700 2.300 9.500.9 5.300.5 4.100.6 2.700 1.500 1.800z"/></svg>
<span class="t" style="left:351px;top:339.30px;font-size:15px;line-height:15px;color:#777;transform:scaleX(0.9948);">1234567890</span>
<div class="b" style="left:347px;top:358px;width:141px;height:1px;background:#d9d9d9;"></div>
<svg style="position:absolute;left:490px;top:340px" width="18" height="13" viewBox="0 0 18 14" fill="#777" color="#777" preserveAspectRatio="none" ><path d="M1.600 0h14.800c.9 0 1.600.7 1.600 1.600 0 .9-.5 1.600-1.200 2.100L10.200 8.200c-.7.500-1.700.5-2.400 0L1.200 3.700C.5 3.200 0 2.500 0 1.600 0 .7.700 0 1.600 0z"/><path d="M0 4.700l7 4.900c1.200.8 2.800.8 4 0l7-4.900v7.700c0 .9-.7 1.600-1.600 1.600H1.600C.7 14 0 13.300 0 12.400z"/></svg>
<span class="t" style="left:516px;top:339.30px;font-size:15px;line-height:15px;color:#777;transform:scaleX(1.0094);">barin@mail.su</span>
<div class="b" style="left:513px;top:358px;width:137px;height:1px;background:#d9d9d9;"></div>
<div class="b" style="left:282.5px;top:395px;width:39px;height:39.5px;background:#fff;border:1px solid #3a7fc1;border-radius:3px;"></div>
<span class="t" style="left:331px;top:397.61px;font-size:17px;line-height:17px;color:#000;font-weight:bold;transform:scaleX(0.9088);">Берёзкина Алёна Петровна</span>
<div class="b" style="left:327px;top:420px;width:320px;height:1px;background:#d9d9d9;"></div>
<svg style="position:absolute;left:329.5px;top:430.5px" width="14" height="14" viewBox="0 0 14 14" fill="#777" color="#777" preserveAspectRatio="none" ><path d="M3.200.3c.4-.4 1-.4 1.300.1l1.600 2.900c.2.400.1.900-.2 1.200l-1 1c.8 1.700 2 2.900 3.700 3.700l1-1c.3-.3.800-.4 1.200-.2l2.900 1.600c.5.300.5.900.1 1.300l-1.600 1.600c-.9.900-2.300 1-3.500.6C4.500 11.700 2.300 9.500.9 5.300.5 4.100.6 2.700 1.500 1.800z"/></svg>
<div class="b" style="left:347px;top:450px;width:141px;height:1px;background:#d9d9d9;"></div>
<svg style="position:absolute;left:490px;top:431.5px" width="18" height="13" viewBox="0 0 18 14" fill="#777" color="#777" preserveAspectRatio="none" ><path d="M1.600 0h14.800c.9 0 1.600.7 1.600 1.600 0 .9-.5 1.600-1.200 2.100L10.200 8.200c-.7.500-1.700.5-2.400 0L1.200 3.700C.5 3.200 0 2.500 0 1.600 0 .7.700 0 1.600 0z"/><path d="M0 4.700l7 4.900c1.200.8 2.800.8 4 0l7-4.900v7.700c0 .9-.7 1.600-1.600 1.600H1.600C.7 14 0 13.300 0 12.400z"/></svg>
<div class="b" style="left:513px;top:450px;width:137px;height:1px;background:#d9d9d9;"></div>
<div class="b" style="left:671px;top:248px;width:3px;height:692.5px;background:#b0b0b0;"></div>
<div class="b" style="left:682px;top:253px;width:1210px;height:93px;background:#efefef;"></div>
<span class="t" style="left:687px;top:258.61px;font-size:17px;line-height:17px;color:#000;font-weight:bold;transform:scaleX(0.9425);">Профиль</span>
<div class="b" style="left:687px;top:281px;width:1166px;height:28px;background:#fff;border:1px solid #b9b9b9;"></div>
<span class="t" style="left:692px;top:288.46px;font-size:16px;line-height:16px;color:#333;transform:scaleX(1.0269);">5152748 - (барин) Берёзкин Иван Никифорович (баланс по профилю: 0 ₽)</span>
<div class="b" style="left:1853px;top:281px;width:35px;height:28px;background:#f2f2f2;border:1px solid #e0e0e0;"></div>
<svg style="position:absolute;left:1862px;top:287px" width="17" height="15" viewBox="0 0 18 16" fill="#bdbdbd" color="#bdbdbd" preserveAspectRatio="none" ><path d="M3 3h7v1.600H3A1.400 1.400 0 0 0 1.600 6v7A1.400 1.400 0 0 0 3 14.400h8A1.400 1.400 0 0 0 12.400 13V9.500H14V13a3 3 0 0 1-3 3H3a3 3 0 0 1-3-3V6a3 3 0 0 1 3-3z"/><path d="M11 0h7v7l-2.400-2.400-6 6-2.200-2.200 6-6z"/></svg>
<div class="b" style="left:1479px;top:316px;width:68px;height:26px;background:#f4f4f4;border:1px solid #e2e2e2;border-radius:4px;"></div>
<span class="t" style="left:1486px;top:320.60px;font-size:15px;line-height:15px;color:#b5b5b5;transform:scaleX(0.9120);">Создать</span>
<div class="b" style="left:1554px;top:316px;width:85px;height:26px;background:#f4f4f4;border:1px solid #e2e2e2;border-radius:4px;"></div>
<span class="t" style="left:1561.5px;top:320.60px;font-size:15px;line-height:15px;color:#b5b5b5;transform:scaleX(0.9450);">Привязать</span>
<div class="b" style="left:1646px;top:316px;width:75px;height:26px;background:#fff;border:1px solid #d0d0d0;border-radius:4px;"></div>
<span class="t" style="left:1653px;top:320.60px;font-size:15px;line-height:15px;color:#444;transform:scaleX(0.9212);">Отвязать</span>
<div class="b" style="left:1728px;top:316px;width:159px;height:26px;background:#fff;border:1px solid #d0d0d0;border-radius:4px;"></div>
<span class="t" style="left:1735px;top:320.60px;font-size:15px;line-height:15px;color:#444;transform:scaleX(0.9416);">Сохранить в профиль</span>
<div class="b" style="left:1766px;top:347px;width:127px;height:26px;background:#f7f7f7;border:1px solid #dedede;border-radius:4px;"></div>
<div class="b" style="left:1772px;top:353px;width:65px;height:17px;background:#1d7d9a;border-radius:3px;"></div>
<span class="t" style="left:1775px;top:355.57px;font-size:13.5px;line-height:13.5px;color:#fff;transform:scaleX(0.9682);">Отправка</span>
<div class="b" style="left:1842px;top:347px;width:51px;height:26px;background:#fff;border:1px solid #dedede;border-radius:4px;"></div>
<svg style="position:absolute;left:1858px;top:352.5px" width="19.5" height="15" viewBox="0 0 24 18" fill="#555" color="#555" preserveAspectRatio="none" ><path fill-rule="evenodd" d="M0 1.500A1.500 1.500 0 0 1 1.500 0h5.800c.8 0 1.500.3 2.100.9l8 8c.6.600.6 1.500 0 2.100L12 16.400c-.6.600-1.500.6-2.100 0l-8-8A3 3 0 0 1 1 6.300zm4.200 1.200a1.500 1.500 0 1 0 0 3 1.500 1.500 0 0 0 0-3z"/><path d="M11.300 0h1.800c.8 0 1.500.3 2.100.9l8 8c.6.600.6 1.500 0 2.100l-5.400 5.400c-.6.600-1.500.6-2.100 0l-.5-.5 5.400-5.400c.4-.4.4-1 0-1.400z"/></svg>
<div class="b" style="left:1471px;top:306.5px;width:429px;height:75px;border:5px solid #ed1c24;"></div>
<div class="b" style="left:679px;top:405px;width:1217px;height:1.3px;background:#3a7fc1;"></div>
<div class="b" style="left:681px;top:375px;width:167px;height:30px;background:#2a76bc;border-radius:4px 4px 0 0;"></div>
<span class="t" style="left:692px;top:382.03px;font-size:16.5px;line-height:16.5px;color:#fff;transform:scaleX(0.9239);">Общая информация</span>
<div class="b" style="left:852.5px;top:375px;width:170px;height:30px;background:#efefef;border-radius:4px 4px 0 0;"></div>
<span class="t" style="left:863px;top:382.03px;font-size:16.5px;line-height:16.5px;color:#444;transform:scaleX(0.9397);">Документы и адреса</span>
<div class="b" style="left:1027px;top:375px;width:72px;height:30px;background:#efefef;border-radius:4px 4px 0 0;"></div>
<span class="t" style="left:1038px;top:382.03px;font-size:16.5px;line-height:16.5px;color:#444;transform:scaleX(0.9535);">Файлы</span>
<div class="b" style="left:1103px;top:375px;width:139px;height:30px;background:#efefef;border-radius:4px 4px 0 0;"></div>
<span class="t" style="left:1114px;top:382.03px;font-size:16.5px;line-height:16.5px;color:#444;transform:scaleX(0.9311);">Файлы профиля</span>
<span class="t" style="left:686px;top:415.57px;font-size:13.5px;line-height:13.5px;color:#999;transform:scaleX(0.9943);">Фамилия</span>
<span class="t" style="left:983px;top:415.57px;font-size:13.5px;line-height:13.5px;color:#999;transform:scaleX(0.9887);">Имя</span>
<span class="t" style="left:1279px;top:415.57px;font-size:13.5px;line-height:13.5px;color:#999;transform:scaleX(0.9712);">Отчество</span>
<span class="t" style="left:1576px;top:415.57px;font-size:13.5px;line-height:13.5px;color:#999;transform:scaleX(0.9701);">Обращение</span>
<div class="b" style="left:686px;top:432px;width:290px;height:28px;background:#ffffcc;border:1px solid #cfcfcf;border-top-color:#b0b0b0;border-bottom:none;"></div>
<span class="t" style="left:694px;top:438.88px;font-size:15.5px;line-height:15.5px;color:#111;transform:scaleX(0.9532);">Берёзкин</span>
<div class="b" style="left:983px;top:432px;width:291px;height:28px;background:#fff;border:1px solid #cfcfcf;border-top-color:#b0b0b0;border-bottom:none;"></div>
<span class="t" style="left:991px;top:438.88px;font-size:15.5px;line-height:15.5px;color:#111;transform:scaleX(0.9343);">Иван</span>
<div class="b" style="left:1279px;top:432px;width:291px;height:28px;background:#fff;border:1px solid #cfcfcf;border-top-color:#b0b0b0;border-bottom:none;"></div>
<span class="t" style="left:1287px;top:438.88px;font-size:15.5px;line-height:15.5px;color:#111;transform:scaleX(0.9507);">Никифорович</span>
<div class="b" style="left:1576px;top:432px;width:291px;height:28px;background:#fff;border:1px solid #cfcfcf;border-top-color:#b0b0b0;border-bottom:none;"></div>
<span class="t" style="left:1584px;top:438.88px;font-size:15.5px;line-height:15.5px;color:#111;transform:scaleX(0.9306);">барин</span>
<span class="t" style="left:686px;top:473.57px;font-size:13.5px;line-height:13.5px;color:#999;transform:scaleX(0.9679);">Пол</span>
<span class="t" style="left:983px;top:473.57px;font-size:13.5px;line-height:13.5px;color:#999;transform:scaleX(0.9686);">Номер телефона</span>
<span class="t" style="left:1576px;top:473.57px;font-size:13.5px;line-height:13.5px;color:#999;transform:scaleX(1.0192);">E-mail</span>
<div class="b" style="left:686px;top:489px;width:291px;height:29px;background:#fff;border:1px solid #cfcfcf;border-top-color:#b0b0b0;"></div>
<svg style="position:absolute;left:965px;top:501px" width="7" height="3.5" viewBox="0 0 8 4" fill="#444" color="#444" preserveAspectRatio="none" ><path d="M0 0h8L4 4z"/></svg>
<svg style="position:absolute;left:947.5px;top:498.5px" width="9" height="9" viewBox="0 0 10 10" fill="#444" color="#444" preserveAspectRatio="none" ><path d="M1.300 0L5 3.700 8.700 0 10 1.300 6.300 5 10 8.700 8.700 10 5 6.300 1.300 10 0 8.700 3.700 5 0 1.300z"/></svg>
<span class="t" style="left:691px;top:496.88px;font-size:15.5px;line-height:15.5px;color:#222;transform:scaleX(1.0426);">[М] Мужской</span>
<div class="b" style="left:983px;top:489px;width:291px;height:29px;background:#fff;border:1px solid #cfcfcf;border-top-color:#b0b0b0;"></div>
<span class="t" style="left:991px;top:495.88px;font-size:15.5px;line-height:15.5px;color:#111;transform:scaleX(0.9859);">1234567890</span>
<div class="b" style="left:1279px;top:490px;width:45px;height:22px;background:#2a76bc;border-radius:11px;"></div>
<div class="b" style="left:1303px;top:491px;width:19.5px;height:20px;background:#e9eef5;border-radius:10px;"></div>
<span class="t" style="left:1326px;top:492.88px;font-size:15.5px;line-height:15.5px;color:#111;transform:scaleX(0.8986);">уведомлять по СМС</span>
<div class="b" style="left:1576px;top:489px;width:291px;height:29px;background:#fff;border:1px solid #cfcfcf;border-top-color:#b0b0b0;"></div>
<span class="t" style="left:1584px;top:495.88px;font-size:15.5px;line-height:15.5px;color:#111;transform:scaleX(0.9769);">barin@mail.su</span>
<span class="t" style="left:686px;top:530.57px;font-size:13.5px;line-height:13.5px;color:#999;transform:scaleX(1.0080);">Дата рождения</span>
<span class="t" style="left:983px;top:530.57px;font-size:13.5px;line-height:13.5px;color:#999;transform:scaleX(1.0139);">Язык</span>
<span class="t" style="left:1279px;top:530.57px;font-size:13.5px;line-height:13.5px;color:#999;transform:scaleX(0.9816);">Автомобиль</span>
<span class="t" style="left:1576px;top:530.57px;font-size:13.5px;line-height:13.5px;color:#999;transform:scaleX(0.9886);">Цель поездки</span>
<div class="b" style="left:686px;top:547px;width:118px;height:28px;background:#fff;border:1px solid #cfcfcf;border-top-color:#b0b0b0;"></div>
<svg style="position:absolute;left:792px;top:559px" width="7" height="3.5" viewBox="0 0 8 4" fill="#444" color="#444" preserveAspectRatio="none" ><path d="M0 0h8L4 4z"/></svg>
<svg style="position:absolute;left:774.5px;top:556.5px" width="9" height="9" viewBox="0 0 10 10" fill="#444" color="#444" preserveAspectRatio="none" ><path d="M1.300 0L5 3.700 8.700 0 10 1.300 6.300 5 10 8.700 8.700 10 5 6.300 1.300 10 0 8.700 3.700 5 0 1.300z"/></svg>
<span class="t" style="left:691px;top:554.88px;font-size:15.5px;line-height:15.5px;color:#222;transform:scaleX(0.9539);">19.09.1979</span>
<span class="t" style="left:811px;top:553.88px;font-size:15.5px;line-height:15.5px;color:#333;transform:scaleX(0.9167);">42 л.</span>
<div class="b" style="left:983px;top:547px;width:291px;height:28px;background:#fff;border:1px solid #cfcfcf;border-top-color:#b0b0b0;"></div>
<svg style="position:absolute;left:1262px;top:559px" width="7" height="3.5" viewBox="0 0 8 4" fill="#444" color="#444" preserveAspectRatio="none" ><path d="M0 0h8L4 4z"/></svg>
<svg style="position:absolute;left:1244.5px;top:556.5px" width="9" height="9" viewBox="0 0 10 10" fill="#444" color="#444" preserveAspectRatio="none" ><path d="M1.300 0L5 3.700 8.700 0 10 1.300 6.300 5 10 8.700 8.700 10 5 6.300 1.300 10 0 8.700 3.700 5 0 1.300z"/></svg>
<span class="t" style="left:988px;top:554.88px;font-size:15.5px;line-height:15.5px;color:#222;transform:scaleX(0.9171);">RUS - Russian</span>
<div class="b" style="left:1279px;top:547px;width:291px;height:28px;background:#fff;border:1px solid #cfcfcf;border-top-color:#b0b0b0;"></div>
<span class="t" style="left:1287px;top:553.88px;font-size:15.5px;line-height:15.5px;color:#111;transform:scaleX(0.9005);">телега</span>
<div class="b" style="left:1576px;top:547px;width:291px;height:28px;background:#fff;border:1px solid #cfcfcf;border-top-color:#b0b0b0;"></div>
<svg style="position:absolute;left:1855px;top:559px" width="7" height="3.5" viewBox="0 0 8 4" fill="#444" color="#444" preserveAspectRatio="none" ><path d="M0 0h8L4 4z"/></svg>
<svg style="position:absolute;left:1837.5px;top:556.5px" width="9" height="9" viewBox="0 0 10 10" fill="#444" color="#444" preserveAspectRatio="none" ><path d="M1.300 0L5 3.700 8.700 0 10 1.300 6.300 5 10 8.700 8.700 10 5 6.300 1.300 10 0 8.700 3.700 5 0 1.300z"/></svg>
<span class="t" style="left:1581px;top:554.88px;font-size:15.5px;line-height:15.5px;color:#222;transform:scaleX(0.9614);">ТУР - Туризм</span>
<span class="t" style="left:686px;top:587.57px;font-size:13.5px;line-height:13.5px;color:#999;transform:scaleX(0.9934);">Законный представитель</span>
<span class="t" style="left:1280px;top:587.57px;font-size:13.5px;line-height:13.5px;color:#999;transform:scaleX(0.9887);">Ответственное лицо</span>
<div class="b" style="left:686px;top:604px;width:591px;height:29px;background:#fff;border:1px solid #cfcfcf;border-top-color:#b0b0b0;"></div>
<div class="b" style="left:1280px;top:604px;width:291px;height:29px;background:#fff;border:1px solid #cfcfcf;border-top-color:#b0b0b0;"></div>
<svg style="position:absolute;left:1559px;top:616px" width="7" height="3.5" viewBox="0 0 8 4" fill="#444" color="#444" preserveAspectRatio="none" ><path d="M0 0h8L4 4z"/></svg>
<span class="t" style="left:686px;top:645.57px;font-size:13.5px;line-height:13.5px;color:#999;transform:scaleX(0.9870);">Предыдущее место пребывания</span>
<div class="b" style="left:686px;top:661px;width:588px;height:29px;background:#fff;border:1px solid #cfcfcf;border-top-color:#b0b0b0;"></div>
<span class="t" style="left:686px;top:702.57px;font-size:13.5px;line-height:13.5px;color:#999;transform:scaleX(1.0110);">Примечание</span>
<div class="b" style="left:686px;top:719px;width:1182px;height:77px;background:#fff;border:1px solid #d6d6d6;border-right:none;"></div>
<svg style="position:absolute;left:1853px;top:724px" width="7" height="3.5" viewBox="0 0 8 4" fill="#ccc" color="#ccc" preserveAspectRatio="none" ><path d="M0 4h8L4 0z"/></svg>
<svg style="position:absolute;left:1853px;top:786px" width="7" height="3.5" viewBox="0 0 8 4" fill="#ccc" color="#ccc" preserveAspectRatio="none" ><path d="M0 0h8L4 4z"/></svg>
<span class="t" style="left:686px;top:808.57px;font-size:13.5px;line-height:13.5px;color:#999;transform:scaleX(0.9434);">Телефоны</span>
<span class="t" style="left:689px;top:829.57px;font-size:13.5px;line-height:13.5px;color:#222;transform:scaleX(0.9887);">Добавить</span>
<span class="t" style="left:757px;top:829.57px;font-size:13.5px;line-height:13.5px;color:#c4c4c4;transform:scaleX(0.9312);">Удалить</span>
<div class="b" style="left:685px;top:850px;width:1183px;height:82px;background:#fff;border:1px solid #b9b9b9;"></div>
<div class="b" style="left:686px;top:879px;width:1181px;height:1px;background:#b9b9b9;"></div>
<div class="b" style="left:796px;top:851px;width:1px;height:28px;background:#d0d0d0;"></div>
<span class="t" style="left:691px;top:858.73px;font-size:14.5px;line-height:14.5px;color:#333;transform:scaleX(0.9817);">Тип номера</span>
<span class="t" style="left:801px;top:858.73px;font-size:14.5px;line-height:14.5px;color:#333;transform:scaleX(0.9711);">Номер телефона</span>
<span class="t" style="left:801px;top:886.73px;font-size:14.5px;line-height:14.5px;color:#333;transform:scaleX(1.0291);">1234567890</span>
<div class="b" style="left:686px;top:906px;width:1181px;height:25px;background:#f2f2f2;"></div>
<span class="t" style="left:801px;top:911.73px;font-size:14.5px;line-height:14.5px;color:#333;transform:scaleX(1.0291);">0987654321</span>
<svg style="position:absolute;left:1883px;top:411px" width="7" height="3.5" viewBox="0 0 8 4" fill="#555" color="#555" preserveAspectRatio="none" ><path d="M0 4h8L4 0z"/></svg>
<svg style="position:absolute;left:1883px;top:928px" width="7" height="3.5" viewBox="0 0 8 4" fill="#555" color="#555" preserveAspectRatio="none" ><path d="M0 0h8L4 4z"/></svg>
<div class="b" style="left:1885px;top:420px;width:4px;height:313px;background:#c8c8c8;"></div>
<div class="b" style="left:243px;top:949px;width:1677px;height:47px;background:#fafafa;border-top:1px solid #ececec;"></div>
<div class="b" style="left:268px;top:957px;width:142px;height:31px;background:#fff;border:1px solid #d0d0d0;border-radius:5px;"></div>
<span class="t" style="left:309px;top:963.76px;font-size:18px;line-height:18px;color:#555;transform:scaleX(0.9055);">Сохранить</span>
<div class="b" style="left:416px;top:957px;width:112px;height:31px;background:#fff;border:1px solid #d0d0d0;border-radius:5px;"></div>
<span class="t" style="left:436px;top:963.76px;font-size:18px;line-height:18px;color:#555;transform:scaleX(0.8829);">Выселить</span>
<div class="b" style="left:535px;top:957px;width:196px;height:31px;background:#fff;border:1px solid #d0d0d0;border-radius:5px;"></div>
<span class="t" style="left:554px;top:963.76px;font-size:18px;line-height:18px;color:#555;transform:scaleX(0.9000);">Отменить заселение</span>
<div class="b" style="left:1793px;top:957px;width:103px;height:31px;background:#fff;border:1px solid #d0d0d0;border-radius:5px;"></div>
<span class="t" style="left:1813px;top:963.76px;font-size:18px;line-height:18px;color:#2a6db5;transform:scaleX(0.9231);">Закрыть</span>
<svg style="position:absolute;left:289px;top:966.4px" width="15.3" height="12.5" viewBox="0 0 16 13" fill="#444" color="#444" preserveAspectRatio="none" ><path d="M0 7l2-2 3.800 3.800L13.900 0.700l2 2L5.800 12.900z"/></svg>
</body></html>
